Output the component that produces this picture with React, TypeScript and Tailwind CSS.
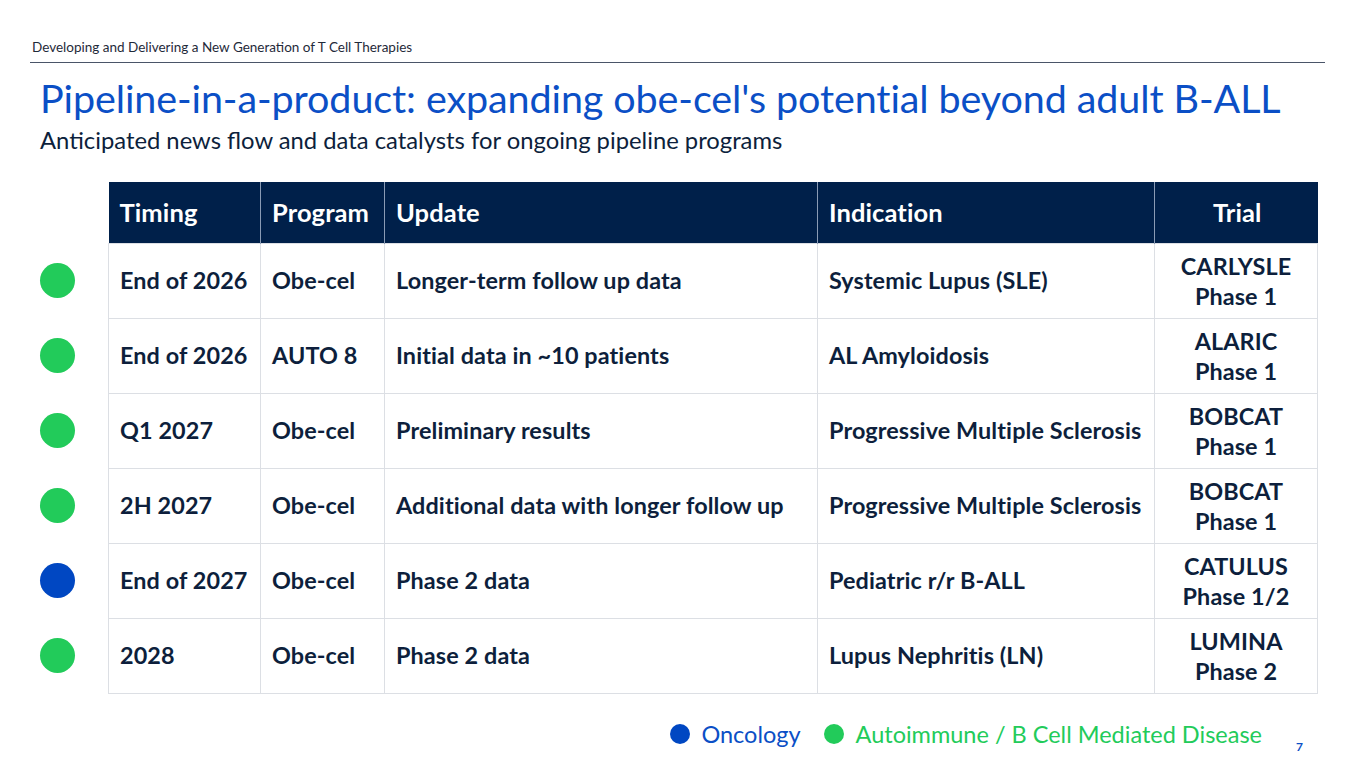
const rows = [
  { dot: "green", timing: "End of 2026", program: "Obe-cel", update: "Longer-term follow up data", indication: "Systemic Lupus (SLE)", trial: "CARLYSLE", phase: "Phase 1" },
  { dot: "green", timing: "End of 2026", program: "AUTO 8", update: "Initial data in ~10 patients", indication: "AL Amyloidosis", trial: "ALARIC", phase: "Phase 1" },
  { dot: "green", timing: "Q1 2027", program: "Obe-cel", update: "Preliminary results", indication: "Progressive Multiple Sclerosis", trial: "BOBCAT", phase: "Phase 1" },
  { dot: "green", timing: "2H 2027", program: "Obe-cel", update: "Additional data with longer follow up", indication: "Progressive Multiple Sclerosis", trial: "BOBCAT", phase: "Phase 1" },
  { dot: "blue", timing: "End of 2027", program: "Obe-cel", update: "Phase 2 data", indication: "Pediatric r/r B-ALL", trial: "CATULUS", phase: "Phase 1/2" },
  { dot: "green", timing: "2028", program: "Obe-cel", update: "Phase 2 data", indication: "Lupus Nephritis (LN)", trial: "LUMINA", phase: "Phase 2" },
];

const font = { fontFamily: "Lato, 'Noto Sans', sans-serif" };

export default function App() {
  return (
    <div className="relative h-[768px] w-[1365px] overflow-hidden bg-white text-[#0d1f3c]" style={font}>
      <div className="px-[32px] pt-[38px] text-[13.5px] leading-[18px] text-[#1f2a3a]">
        Developing and Delivering a New Generation of T Cell Therapies
      </div>
      <div className="mx-[30px] mt-[6px] h-px w-[1295px] bg-[#4a5568]" />

      <h1 className="mt-[13px] pl-[40px] text-[39.5px] leading-[44px] font-normal tracking-[-0.1px] text-[#0b4fc6]">
        Pipeline-in-a-product: expanding obe-cel's potential beyond adult B-ALL
      </h1>
      <p className="mt-[5px] pl-[40px] text-[23.8px] leading-[30px] text-[#0d1f3c]">
        Anticipated news flow and data catalysts for ongoing pipeline programs
      </p>

      <div className="mt-[27px] flex">
        <div className="flex w-[108px] flex-col pl-[40px] pt-[61px]">
          {rows.map((r, i) => (
            <div key={i} className="flex h-[75px] items-center">
              <span className={`h-[35px] w-[35px] rounded-full ${r.dot === "blue" ? "bg-[#0047c2]" : "bg-[#22cb5a]"}`} />
            </div>
          ))}
        </div>

        <table className="w-[1209px] table-fixed border-collapse text-[23.4px] font-bold tracking-[0.1px]">
          <colgroup>
            <col className="w-[152px]" />
            <col className="w-[124px]" />
            <col className="w-[433px]" />
            <col className="w-[337px]" />
            <col className="w-[163px]" />
          </colgroup>
          <thead>
            <tr className="h-[61px] bg-[#00204a] text-[25.5px] text-white">
              <th className="border-r border-[#8a9bb5] pl-[11px] text-left font-bold">Timing</th>
              <th className="border-r border-[#8a9bb5] pl-[11px] text-left font-bold">Program</th>
              <th className="border-r border-[#8a9bb5] pl-[11px] text-left font-bold">Update</th>
              <th className="border-r border-[#8a9bb5] pl-[11px] text-left font-bold">Indication</th>
              <th className="pr-[56px] text-right font-bold">Trial</th>
            </tr>
          </thead>
          <tbody>
            {rows.map((r, i) => (
              <tr key={i} className="h-[75px]">
                <td className="border border-[#dcdfe4] pl-[11px]">{r.timing}</td>
                <td className="border border-[#dcdfe4] pl-[11px]">{r.program}</td>
                <td className="border border-[#dcdfe4] pl-[11px]">{r.update}</td>
                <td className="border border-[#dcdfe4] pl-[11px]">{r.indication}</td>
                <td className="border border-[#dcdfe4] text-center leading-[30px]">
                  <div>{r.trial}</div>
                  <div>{r.phase}</div>
                </td>
              </tr>
            ))}
          </tbody>
        </table>
      </div>

      <div className="mt-[25px] flex items-center justify-end pr-[103px] text-[23.5px] leading-[30px]">
        <span className="mr-[11px] h-[20px] w-[20px] rounded-full bg-[#0047c2]" />
        <span className="text-[#0b4fc6]">Oncology</span>
        <span className="ml-[23px] mr-[12px] h-[20px] w-[20px] rounded-full bg-[#22cb5a]" />
        <span className="text-[#22cb5a]">Autoimmune / B Cell Mediated Disease</span>
      </div>
      <div className="absolute bottom-[12px] right-[62px] text-[12px] font-bold text-[#0b4fc6]">7</div>
    </div>
  );
}
